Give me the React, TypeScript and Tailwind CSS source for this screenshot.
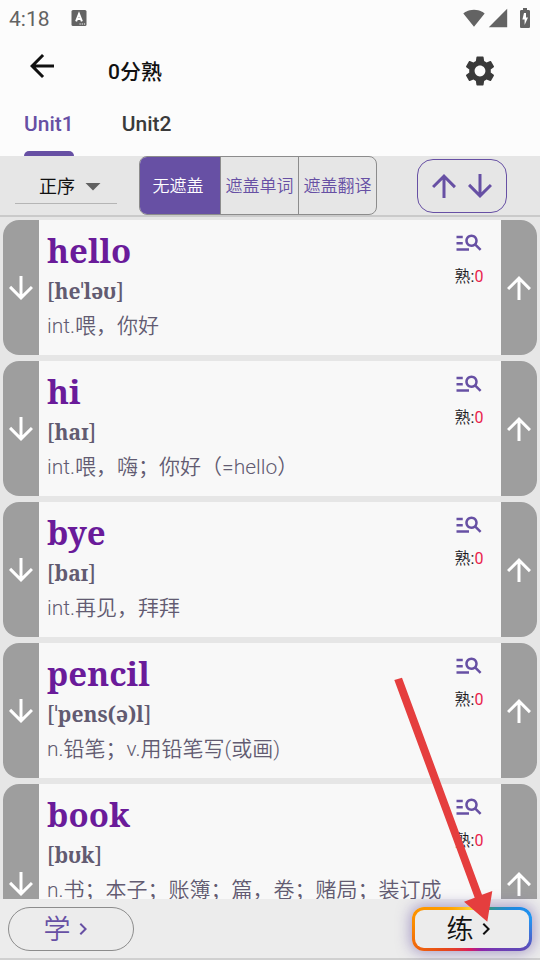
import React from "react";
import {
  MdArrowBack,
  MdArrowDownward,
  MdArrowDropDown,
  MdArrowUpward,
  MdChevronRight,
  MdManageSearch,
  MdSettings,
  MdSignalCellular4Bar,
  MdSignalWifi4Bar,
} from "react-icons/md";

type Word = { word: string; phonetic: string; meaning: string; known: number };

const words: Word[] = [
  { word: "hello", phonetic: "heˈləʊ", meaning: "int.喂，你好", known: 0 },
  { word: "hi", phonetic: "haɪ", meaning: "int.喂，嗨；你好（=hello）", known: 0 },
  { word: "bye", phonetic: "baɪ", meaning: "int.再见，拜拜", known: 0 },
  { word: "pencil", phonetic: "ˈpens(ə)l", meaning: "n.铅笔；v.用铅笔写(或画)", known: 0 },
  { word: "book", phonetic: "bʊk", meaning: "n.书；本子；账簿；篇，卷；赌局；装订成", known: 0 },
];

const masks = ["无遮盖", "遮盖单词", "遮盖翻译"];

function StatusBar() {
  return (
    <div className="flex h-9 items-center pr-[3px] pl-[9px] text-[#636363]">
      <span className="pt-0.5 text-[21px] leading-9">4:18</span>
      <svg className="ml-[21px] size-4" viewBox="0 0 15 16" aria-hidden="true">
        <rect width="15" height="16" rx="1.5" fill="#636363" />
        <path d="M4.6 11.4 7.5 4l2.9 7.4M5.6 9h3.8" fill="none" stroke="#fff" strokeWidth="2" />
        <path d="M8 14h1.2M10.2 14h1.2M12.4 14h1.2" stroke="#fff" strokeWidth="1.2" />
      </svg>
      <div className="ml-auto flex items-center">
        <MdSignalWifi4Bar className="mr-0.5 size-[22px]" />
        <MdSignalCellular4Bar className="mr-1 size-[22px]" />
        <svg className="size-6" viewBox="0 0 24 24" aria-hidden="true">
          <path
            d="M15.67 4H14V2h-4v2H8.33C7.6 4 7 4.6 7 5.33v15.33C7 21.4 7.6 22 8.33 22h7.33c.74 0 1.34-.6 1.34-1.33V5.33C17 4.6 16.4 4 15.67 4z"
            fill="currentColor"
          />
          <path d="M13 7v4.6h2L11.6 19v-5.4H9.4L11 7z" fill="#fff" />
        </svg>
      </div>
    </div>
  );
}

function WordCard({ item }: { item: Word }) {
  return (
    <li className="flex min-h-[135px] shrink-0 overflow-hidden rounded-2xl bg-[#f8f8f8] last:min-h-[200px]">
      <button aria-label="下移" className="flex w-9 shrink-0 items-center justify-center bg-[#9e9e9e] text-white">
        <MdArrowDownward className="size-9" />
      </button>
      <div className="flex min-w-0 flex-1 justify-between pr-[17px] pl-2">
        <div className="min-w-0 text-[#625b71]">
          <h2 className="pt-2 font-['Noto_Serif','DejaVu_Serif_Condensed','DejaVu_Serif',serif] text-[33px] leading-[45px] font-bold text-[#6a1b9a]">
            {item.word}
          </h2>
          <p className="font-['Noto_Serif','DejaVu_Serif_Condensed','DejaVu_Serif',serif] text-[21px] leading-9 font-bold">
            <span className="font-normal">[</span>
            {item.phonetic}
            <span className="font-normal">]</span>
          </p>
          <p className="text-[21px] leading-[34px] font-[350]">{item.meaning}</p>
        </div>
        <div className="flex shrink-0 flex-col items-center pt-[7px] text-base">
          <button aria-label="查词" className="text-[#6750a4]">
            <MdManageSearch className="size-[30px]" />
          </button>
          <p className="mt-2 leading-6 text-[#1c1b1f]">
            <span className="font-[350]">熟</span>:<span className="text-[#e91e4c]">{item.known}</span>
          </p>
        </div>
      </div>
      <button aria-label="上移" className="flex w-9 shrink-0 items-center justify-center bg-[#9e9e9e] text-white">
        <MdArrowUpward className="size-9" />
      </button>
    </li>
  );
}

export default function App() {
  return (
    <div className="relative flex h-screen flex-col overflow-hidden bg-[#e6e6e6] font-[Roboto,'Noto_Sans_CJK_SC',sans-serif]">
      <header className="bg-[#fcfcfc]">
        <StatusBar />
        <div className="flex h-[70px] items-center pr-[42px] pl-6">
          <button aria-label="返回" className="mb-2.5 text-[#111]">
            <MdArrowBack className="size-9" />
          </button>
          <h1 className="ml-12 pt-1 text-[21px] font-medium text-[#111]">0分熟</h1>
          <button aria-label="设置" className="ml-auto text-[#3a3a3a]">
            <MdSettings className="size-9" />
          </button>
        </div>
        <nav className="flex gap-12 px-6 text-[21px] font-medium">
          <button className="flex h-[50px] flex-col justify-between text-[#6750a4]">
            <span className="pt-0.5 leading-8">Unit1</span>
            <span className="h-[5px] w-full rounded-t-[5px] bg-[#6750a4]" />
          </button>
          <button className="flex h-[50px] flex-col text-[#3a3a3a]">
            <span className="pt-0.5 leading-8">Unit2</span>
          </button>
        </nav>
      </header>

      <div className="flex h-[61px] shrink-0 items-start justify-between border-b-2 border-[#cacaca] pr-[33px] pl-[15px]">
        <div className="flex">
          <label className="relative mt-3 h-9 w-[102px] border-b border-[#b5b5b5]">
            <select
              aria-label="排序"
              defaultValue="正序"
              className="h-9 w-full appearance-none bg-transparent pt-0.5 pl-6 text-lg text-[#111] outline-none"
            >
              <option>正序</option>
              <option>倒序</option>
            </select>
            <MdArrowDropDown className="pointer-events-none absolute top-0 right-1.5 size-9 text-[#616161]" />
          </label>
          <div className="ml-[22px] flex h-[59px] overflow-hidden rounded-lg border border-[#8c8c8c] text-[17px] font-[350]">
            {masks.map((m, i) => (
              <button
                key={m}
                className={
                  i === 0
                    ? "w-20 bg-[#6750a4] pt-0.5 pr-1 text-white"
                    : "w-[78px] border-l border-[#8c8c8c] pt-0.5 text-[#6750a4]"
                }
              >
                {m}
              </button>
            ))}
          </div>
        </div>
        <button
          aria-label="切换方向"
          className="mt-[3px] flex h-[54px] w-[90px] items-center justify-center rounded-2xl border border-[#6750a4] text-[#6750a4]"
        >
          <MdArrowUpward className="size-9" />
          <MdArrowDownward className="size-9" />
        </button>
      </div>

      <ul className="flex min-h-0 flex-1 flex-col gap-1.5 overflow-hidden px-[3px] pt-[3px]">
        {words.map((w) => (
          <WordCard key={w.word} item={w} />
        ))}
      </ul>

      <footer className="flex h-[61px] shrink-0 items-start justify-between border-b-2 border-[#d0d0d0] bg-[#ececec] px-2 pt-2 text-[27px]">
        <button className="flex h-11 w-[126px] items-center justify-center rounded-full border border-[#8c8c8c] pr-1 text-[#6750a4]">
          <span className="pt-0.5 font-[350]">学</span>
          <MdChevronRight className="size-6" />
        </button>
        <button className="h-11 w-[120px] rounded-xl bg-[conic-gradient(from_0deg,#fdd835_0deg,#43a047_25deg,#1e88e5_65deg,#2196f3_80deg,#5e4bb8_110deg,#8e24aa_155deg,#d81b60_185deg,#e64a19_235deg,#fb8c00_275deg,#ffa000_310deg,#fdd835_360deg)] p-[3px] shadow-[0_0_14px_2px_#6750a480]">
          <span className="flex h-full items-center justify-center rounded-[9px] bg-[#ececec] text-[#111]">
            <span className="pt-0.5 font-[350]">练</span>
            <MdChevronRight className="size-6" />
          </span>
        </button>
      </footer>

      <svg
        className="pointer-events-none absolute right-[46px] bottom-[37px] h-[246px] w-[100px]"
        viewBox="0 0 100 246"
        aria-hidden="true"
      >
        <path d="M.3 3 8 .7 88 217.7 98.3 214 93.3 244.7 70 224.7 80.7 220.7z" fill="#e53e3e" />
      </svg>
    </div>
  );
}
